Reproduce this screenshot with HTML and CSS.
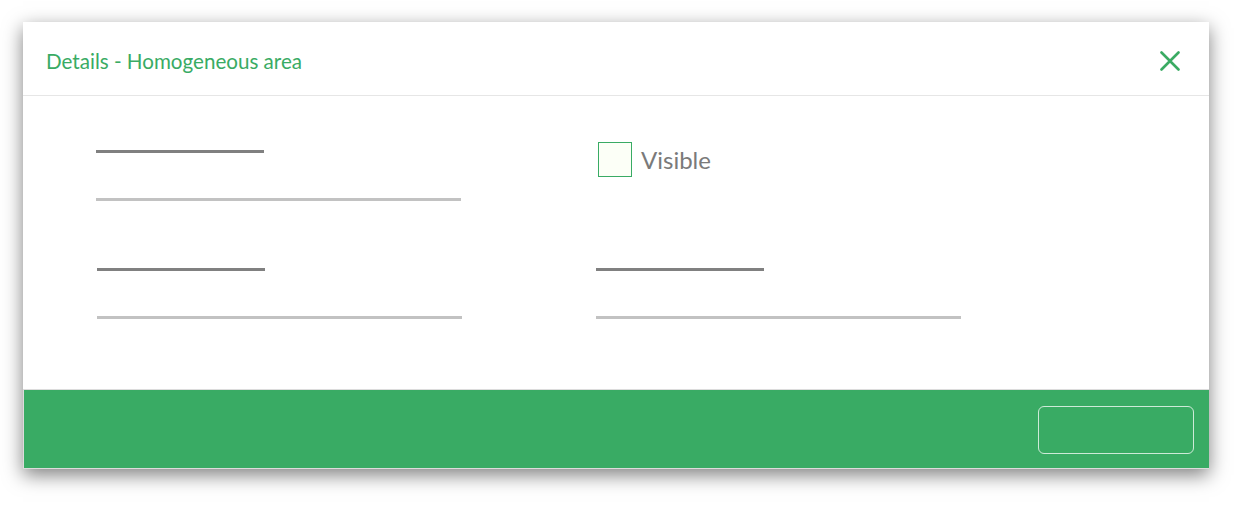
FILE: index.html
```html
<!DOCTYPE html>
<html lang="en">
  <head>
    <meta charset="UTF-8" />
    <meta name="viewport" content="width=device-width, initial-scale=1.0" />
    <title>Details - Homogeneous area</title>
    <link rel="stylesheet" href="styles.css">
  </head>
  <body>
    <div class="dialog">
      <div class="dialog-header">
        <h1 class="dialog-title">Details - Homogeneous area</h1>
        <button class="close-btn" type="button" aria-label="Close">
          <svg width="20" height="20" viewBox="0 0 20 20">
            <path d="M1.5 1.5 L18.5 18.5 M18.5 1.5 L1.5 18.5" stroke="#3aab63" stroke-width="2.6" stroke-linecap="round" fill="none" />
          </svg>
        </button>
      </div>
      <div class="dialog-body">
        <div class="field">
          <div class="field-label"></div>
          <div class="field-input"></div>
        </div>
        <label class="check">
          <span class="check-box"></span>
          <span class="check-text">Visible</span>
        </label>
        <div class="field shift">
          <div class="field-label"></div>
          <div class="field-input"></div>
        </div>
        <div class="field">
          <div class="field-label"></div>
          <div class="field-input"></div>
        </div>
      </div>
      <div class="dialog-footer">
        <button class="btn-outline" type="button"></button>
      </div>
    </div>
  </body>
</html>
```

FILE: styles.css
```css
:root {
  --green: #39ab64;
  --label: #808080;
  --line: #c2c2c2;
}
html {
  background: white;
}
body {
  margin: 0;
  min-height: 510px;
  box-sizing: border-box;
  padding: 22px 0 30px 23px;
  font-family: Lato, "Open Sans", sans-serif;
}
.dialog {
  position: relative;
  width: 1186px;
  background: white;
  box-shadow: 0 6px 18px rgba(0, 0, 0, 0.5);
}
.dialog-header {
  height: 69px;
  padding: 4px 29px 0 23px;
  border-bottom: 1px solid #e6e6e6;
  display: flex;
  align-items: center;
  justify-content: space-between;
}
.dialog-title {
  margin: 0;
  font-size: 20.6px;
  font-weight: normal;
  color: var(--green);
}
.close-btn {
  border: none;
  background: none;
  padding: 0;
  width: 20px;
  height: 20px;
  cursor: pointer;
}
.dialog-body {
  height: 293px;
  box-sizing: border-box;
  padding: 54px 0 0 73px;
  display: grid;
  grid-template-columns: 365px 365px;
  grid-auto-rows: min-content;
  column-gap: 135px;
  row-gap: 67px;
}
.field-label {
  width: 168px;
  height: 3px;
  background: var(--label);
}
.field-input {
  width: 365px;
  height: 3px;
  margin-top: 45px;
  background: var(--line);
}
.shift {
  margin-left: 1px;
}
.check {
  display: flex;
  align-items: center;
  gap: 9px;
  margin: -8px 0 0 2px;
  align-self: start;
}
.check-box {
  width: 32px;
  height: 33px;
  border: 1px solid var(--green);
  background: #fcfff7;
}
.check-text {
  font-size: 24px;
  color: #7a7a7a;
}
.dialog-footer {
  height: 78px;
  background: var(--green);
  border: 1px solid #dcdcdc;
  border-right: none;
  display: flex;
  align-items: center;
  justify-content: flex-end;
  padding-right: 15px;
}
.btn-outline {
  width: 156px;
  height: 48px;
  margin-top: 2px;
  background: transparent;
  border: 1.5px solid rgba(255, 255, 255, 0.75);
  border-radius: 6px;
  cursor: pointer;
}
```
